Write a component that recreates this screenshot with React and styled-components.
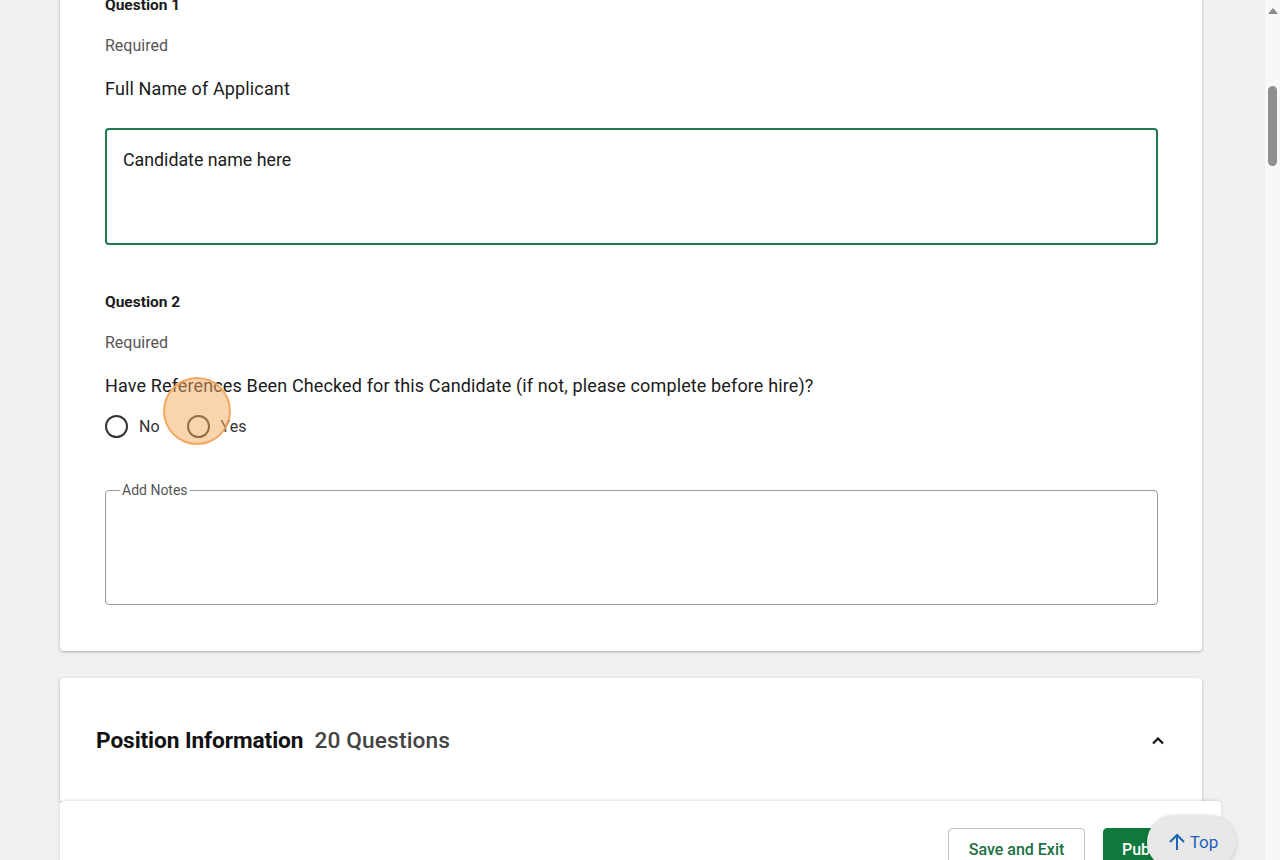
import React from 'react';
import styled, { createGlobalStyle } from 'styled-components';

const GlobalStyle = createGlobalStyle`
  html, body {
    margin: 0;
    padding: 0;
    height: 860px;
    overflow: hidden;
    background: #f0f0f0;
    font-family: Roboto, 'Liberation Sans', sans-serif;
    color: #1b1b1b;
  }
`;

const Shell = styled.div`
  display: flex;
  height: 860px;
  overflow: hidden;
`;

const Main = styled.main`
  position: relative;
  flex: 1;
  padding: 0 0 0 60px;
  overflow: hidden;
`;

const ScrollTrack = styled.div`
  width: 15px;
  background: #f8f8f8;
  display: flex;
  flex-direction: column;
  align-items: center;
  padding-top: 8px;
  box-sizing: border-box;
`;

const ScrollArrow = styled.div`
  width: 0;
  height: 0;
  border-left: 5px solid transparent;
  border-right: 5px solid transparent;
  border-bottom: 6px solid #8a8a8a;
`;

const ScrollThumb = styled.div`
  margin-top: 72px;
  width: 9px;
  height: 80px;
  border-radius: 5px;
  background: #8f8f8f;
`;

const Card = styled.section`
  width: 1142px;
  background: #fff;
  border-radius: 4px;
  box-shadow: 0 1px 3px rgba(0, 0, 0, 0.28);
  box-sizing: border-box;
`;

const QuestionsCard = styled(Card)`
  margin-top: -29px;
  padding: 24px 44px 46px 45px;
`;

const QuestionLabel = styled.div`
  font-size: 15.5px;
  line-height: 20px;
  font-weight: 700;
  margin-top: ${(p) => p.$top || 0}px;
`;

const Required = styled.div`
  margin-top: 20px;
  font-size: 16px;
  line-height: 22px;
  color: #555;
`;

const Prompt = styled.div`
  margin-top: 20px;
  font-size: 18px;
  line-height: 24px;
  letter-spacing: 0.13px;
  color: #1b1b1b;
`;

const AnswerBox = styled.div`
  margin-top: 27px;
  height: 117px;
  box-sizing: border-box;
  border: 2px solid #1e7a4e;
  border-radius: 4px;
  padding: 18px 16px;
  font-size: 17.8px;
  line-height: 24px;
`;

const RadioRow = styled.div`
  margin-top: 16px;
  display: flex;
  align-items: center;
  height: 24px;
`;

const RadioOption = styled.label`
  display: flex;
  align-items: center;
  gap: 11px;
  font-size: 16px;
  color: #333;
  margin-right: 27px;
`;

const RadioCircle = styled.span`
  width: 19px;
  height: 19px;
  border: 2px solid #333;
  border-radius: 50%;
`;

const Notes = styled.fieldset`
  margin: 44px 0 0;
  padding: 0 14px;
  border: 1px solid #9a9a9a;
  border-radius: 4px;
  min-width: 0;
`;

const NotesLegend = styled.legend`
  padding: 0 2px;
  font-size: 14px;
  line-height: 16px;
  color: #555;
`;

const NotesBody = styled.div`
  height: 106px;
`;

const SectionCard = styled(Card)`
  margin-top: 27px;
  height: 123px;
  padding: 49px 36px 0 36px;
  border-radius: 4px 4px 0 0;
  display: flex;
  align-items: flex-start;
  justify-content: space-between;
`;

const SectionTitle = styled.h2`
  margin: 0;
  font-size: 22.7px;
  line-height: 28px;
  font-weight: 700;
  color: #111;
  letter-spacing: -0.1px;
`;

const SectionCount = styled.span`
  margin-left: 11px;
  font-weight: 500;
  color: #444;
  letter-spacing: 0.15px;
`;

const Chevron = styled.svg`
  margin-top: 6px;
  margin-right: 0;
`;

const Footer = styled.footer`
  width: 1161px;
  height: 80px;
  background: #fff;
  box-shadow: 0 -1px 3px rgba(0, 0, 0, 0.12);
  border-radius: 4px 4px 0 0;
  display: flex;
  justify-content: flex-end;
  align-items: flex-start;
  gap: 18px;
  padding: 27px 14px 0 0;
  box-sizing: border-box;
`;

const Button = styled.button`
  height: 42px;
  padding: 0 18px;
  font-family: Roboto, 'Liberation Sans', sans-serif;
  font-size: 16px;
  font-weight: 500;
  border-radius: 4px;
  cursor: pointer;
  border: 1px solid ${(p) => (p.$primary ? '#0f7a3c' : '#b9c4bd')};
  background: ${(p) => (p.$primary ? '#0f7a3c' : '#fff')};
  color: ${(p) => (p.$primary ? '#fff' : '#1a7040')};
  ${(p) => (p.$primary ? 'width: 104px; text-align: left;' : 'width: 137px;')}
`;

const TopButton = styled.button`
  position: absolute;
  left: 1147px;
  top: 815px;
  width: 89px;
  height: 54px;
  border-radius: 27px;
  border: none;
  background: #e8e8e8;
  box-shadow: 0 1px 4px rgba(0, 0, 0, 0.18);
  display: flex;
  align-items: center;
  justify-content: center;
  gap: 3px;
  padding: 0 0 0 2px;
  font-family: Roboto, 'Liberation Sans', sans-serif;
  font-size: 17px;
  color: #1d63b8;
  box-sizing: border-box;
`;

const ClickMark = styled.div`
  position: absolute;
  left: 163px;
  top: 377px;
  width: 68px;
  height: 68px;
  border-radius: 50%;
  background: rgba(246, 168, 96, 0.5);
  border: 2px solid rgba(242, 160, 80, 0.85);
  box-sizing: border-box;
  pointer-events: none;
`;

export default function App() {
  return (
    <>
      <GlobalStyle />
      <Shell>
        <Main>
          <QuestionsCard>
            <QuestionLabel>Question 1</QuestionLabel>
            <Required>Required</Required>
            <Prompt>Full Name of Applicant</Prompt>
            <AnswerBox>Candidate name here</AnswerBox>

            <QuestionLabel $top={47}>Question 2</QuestionLabel>
            <Required>Required</Required>
            <Prompt>Have References Been Checked for this Candidate (if not, please complete before hire)?</Prompt>
            <RadioRow>
              <RadioOption>
                <RadioCircle />
                No
              </RadioOption>
              <RadioOption>
                <RadioCircle />
                Yes
              </RadioOption>
            </RadioRow>
            <Notes>
              <NotesLegend>Add Notes</NotesLegend>
              <NotesBody />
            </Notes>
          </QuestionsCard>

          <SectionCard>
            <SectionTitle>
              Position Information
              <SectionCount>20 Questions</SectionCount>
            </SectionTitle>
            <Chevron width="16" height="16" viewBox="0 0 16 16">
              <path d="M3 10.5 L8 5.5 L13 10.5" fill="none" stroke="#111" strokeWidth="2.2" />
            </Chevron>
          </SectionCard>

          <Footer>
            <Button>Save and Exit</Button>
            <Button $primary>Publish</Button>
          </Footer>

          <TopButton>
            <svg width="20" height="20" viewBox="0 0 20 20">
              <path d="M10 18 V3 M3 10 L10 3 L17 10" fill="none" stroke="#1d63b8" strokeWidth="2" />
            </svg>
            Top
          </TopButton>
          <ClickMark />
        </Main>
        <ScrollTrack>
          <ScrollArrow />
          <ScrollThumb />
        </ScrollTrack>
      </Shell>
    </>
  );
}
